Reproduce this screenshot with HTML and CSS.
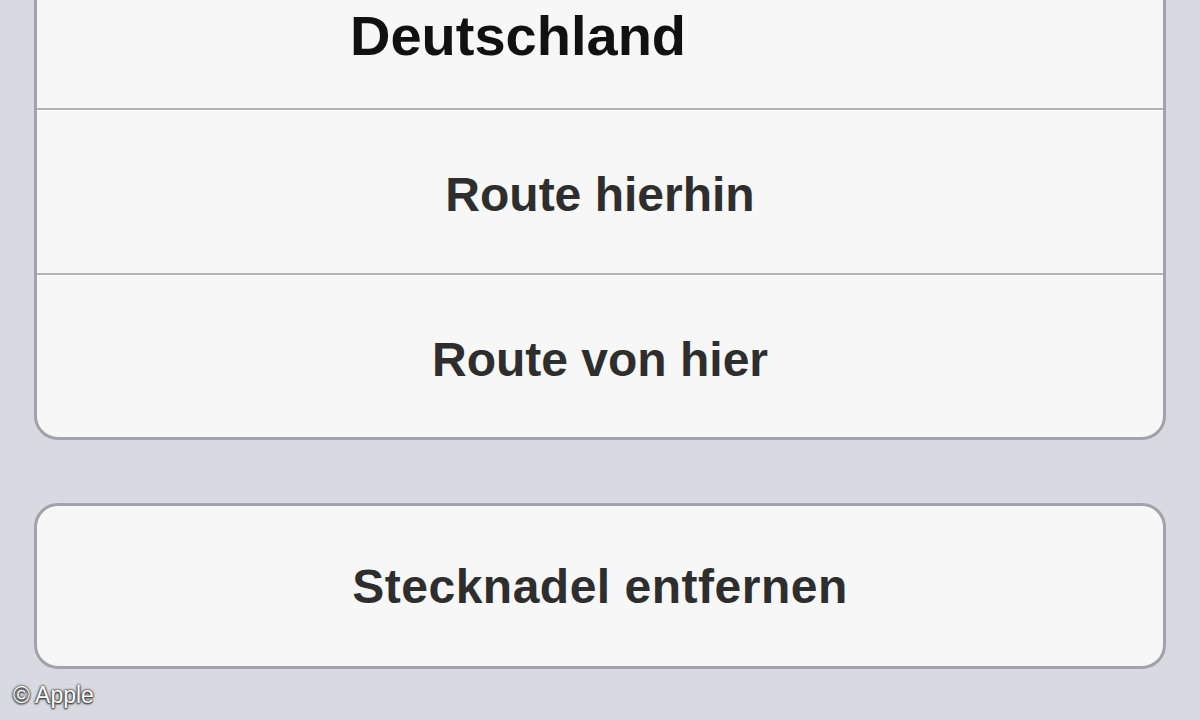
FILE: index.html
```html
<!DOCTYPE html>
<html lang="de">
<head>
    <meta charset="UTF-8">
    <meta name="viewport" content="width=device-width, initial-scale=1.0">
    <link rel="stylesheet" href="styles.css">
    <title>Stecknadel</title>
</head>
<body>
    <div class="sheet">
        <div class="group first">
            <div class="address">Deutschland</div>
            <div class="row action">Route hierhin</div>
            <div class="row action">Route von hier</div>
        </div>
        <div class="group">
            <div class="single action">Stecknadel entfernen</div>
        </div>
    </div>
    <div class="credit">© Apple</div>
</body>
</html>
```

FILE: styles.css
```css
html, body {
    margin: 0;
    padding: 0;
    height: 720px;
    overflow: hidden;
    background-color: #d9d9e1;
    font-family: "Liberation Sans", Arial, sans-serif;
}
.sheet {
    padding: 0 34px;
}
.group {
    background-color: #f7f7f7;
    border: 3px solid #a2a2a8;
    border-radius: 24px;
    overflow: hidden;
}
.first {
    margin-top: -42px;
    margin-bottom: 63px;
}
.address {
    height: 147px;
    box-sizing: border-box;
    display: flex;
    align-items: flex-end;
    padding: 0 0 44px 313px;
    font-size: 56px;
    line-height: 1;
    font-weight: bold;
    color: #111;
}
.action {
    display: flex;
    align-items: center;
    justify-content: center;
    font-size: 48px;
    line-height: 1;
    font-weight: bold;
    color: #2e2e2e;
}
.row {
    height: 165px;
    box-sizing: border-box;
    padding-top: 7px;
    border-top: 2px solid #b4b4b6;
    box-shadow: inset 0 1px 0 #ffffff;
}
.row + .row {
    height: 164px;
}
.single {
    height: 160px;
    padding-top: 2px;
    box-sizing: border-box;
    letter-spacing: 0.5px;
}
.credit {
    position: absolute;
    left: 13px;
    top: 682px;
    font-size: 23px;
    color: #fff;
    text-shadow: 0 0 2px #222, 0 0 3px #444, 0 1px 2px #222;
}
```
